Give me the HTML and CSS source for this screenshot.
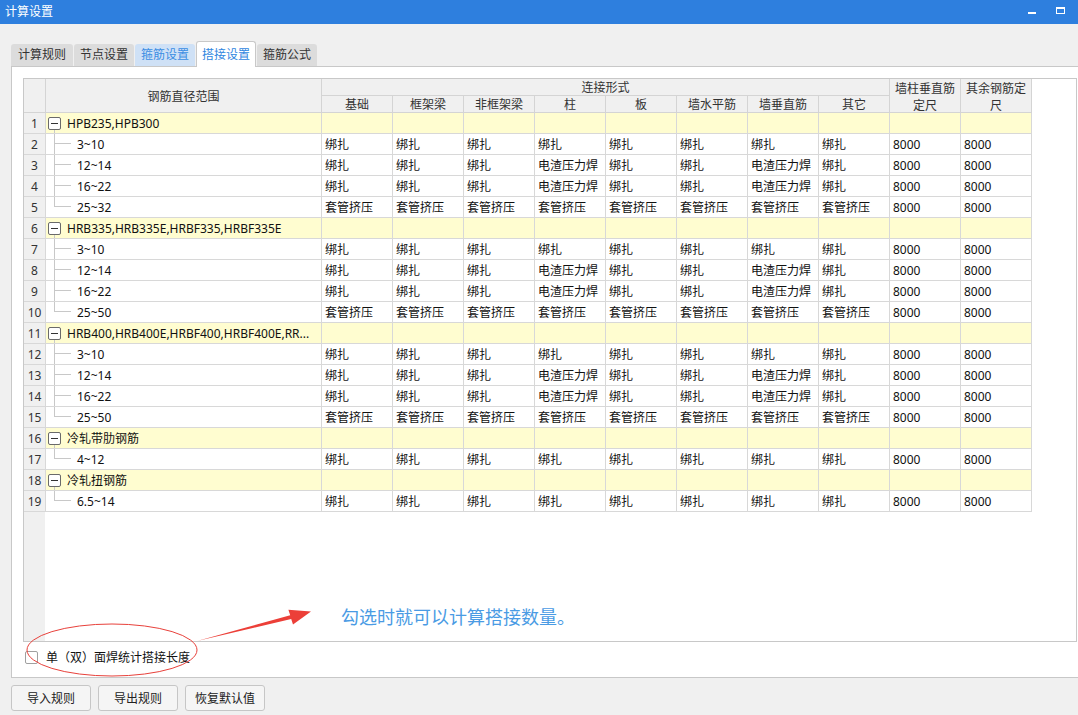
FILE: index.html
```html
<!DOCTYPE html>
<html lang="zh-CN">
<head>
<meta charset="utf-8">
<title>计算设置</title>
<link rel="stylesheet" href="styles.css">
</head>
<body>
<div class="window">
  <div class="titlebar">
    <span class="title">计算设置</span>
    <div class="winbtns"><span class="wmin"></span><span class="wmax"></span></div>
  </div>

  <div class="tabs">
    <div class="tab">计算规则</div>
    <div class="tab">节点设置</div>
    <div class="tab hover">箍筋设置</div>
    <div class="tab active">搭接设置</div>
    <div class="tab">箍筋公式</div>
  </div>

  <div class="panel">
    <div class="grid-area">
      <div class="head">
        <div class="h-num"></div>
        <div class="h-name">钢筋直径范围</div>
        <div class="h-conn">连接形式</div>
        <div class="h-wall">墙柱垂直筋定尺</div>
        <div class="h-rest">其余钢筋定尺</div>
        <div>基础</div><div>框架梁</div><div>非框架梁</div><div>柱</div><div>板</div><div>墙水平筋</div><div>墙垂直筋</div><div>其它</div>
      </div>

      <div class="row group"><div class="num">1</div><div class="name"><span class="tg"></span>HPB235,HPB300</div><div></div><div></div><div></div><div></div><div></div><div></div><div></div><div></div><div></div><div></div></div>
      <div class="row"><div class="num">2</div><div class="name child">3~10</div><div>绑扎</div><div>绑扎</div><div>绑扎</div><div>绑扎</div><div>绑扎</div><div>绑扎</div><div>绑扎</div><div>绑扎</div><div>8000</div><div>8000</div></div>
      <div class="row"><div class="num">3</div><div class="name child">12~14</div><div>绑扎</div><div>绑扎</div><div>绑扎</div><div>电渣压力焊</div><div>绑扎</div><div>绑扎</div><div>电渣压力焊</div><div>绑扎</div><div>8000</div><div>8000</div></div>
      <div class="row"><div class="num">4</div><div class="name child">16~22</div><div>绑扎</div><div>绑扎</div><div>绑扎</div><div>电渣压力焊</div><div>绑扎</div><div>绑扎</div><div>电渣压力焊</div><div>绑扎</div><div>8000</div><div>8000</div></div>
      <div class="row"><div class="num">5</div><div class="name child last">25~32</div><div>套管挤压</div><div>套管挤压</div><div>套管挤压</div><div>套管挤压</div><div>套管挤压</div><div>套管挤压</div><div>套管挤压</div><div>套管挤压</div><div>8000</div><div>8000</div></div>

      <div class="row group"><div class="num">6</div><div class="name"><span class="tg"></span>HRB335,HRB335E,HRBF335,HRBF335E</div><div></div><div></div><div></div><div></div><div></div><div></div><div></div><div></div><div></div><div></div></div>
      <div class="row"><div class="num">7</div><div class="name child">3~10</div><div>绑扎</div><div>绑扎</div><div>绑扎</div><div>绑扎</div><div>绑扎</div><div>绑扎</div><div>绑扎</div><div>绑扎</div><div>8000</div><div>8000</div></div>
      <div class="row"><div class="num">8</div><div class="name child">12~14</div><div>绑扎</div><div>绑扎</div><div>绑扎</div><div>电渣压力焊</div><div>绑扎</div><div>绑扎</div><div>电渣压力焊</div><div>绑扎</div><div>8000</div><div>8000</div></div>
      <div class="row"><div class="num">9</div><div class="name child">16~22</div><div>绑扎</div><div>绑扎</div><div>绑扎</div><div>电渣压力焊</div><div>绑扎</div><div>绑扎</div><div>电渣压力焊</div><div>绑扎</div><div>8000</div><div>8000</div></div>
      <div class="row"><div class="num">10</div><div class="name child last">25~50</div><div>套管挤压</div><div>套管挤压</div><div>套管挤压</div><div>套管挤压</div><div>套管挤压</div><div>套管挤压</div><div>套管挤压</div><div>套管挤压</div><div>8000</div><div>8000</div></div>

      <div class="row group"><div class="num">11</div><div class="name"><span class="tg"></span>HRB400,HRB400E,HRBF400,HRBF400E,RR...</div><div></div><div></div><div></div><div></div><div></div><div></div><div></div><div></div><div></div><div></div></div>
      <div class="row"><div class="num">12</div><div class="name child">3~10</div><div>绑扎</div><div>绑扎</div><div>绑扎</div><div>绑扎</div><div>绑扎</div><div>绑扎</div><div>绑扎</div><div>绑扎</div><div>8000</div><div>8000</div></div>
      <div class="row"><div class="num">13</div><div class="name child">12~14</div><div>绑扎</div><div>绑扎</div><div>绑扎</div><div>电渣压力焊</div><div>绑扎</div><div>绑扎</div><div>电渣压力焊</div><div>绑扎</div><div>8000</div><div>8000</div></div>
      <div class="row"><div class="num">14</div><div class="name child">16~22</div><div>绑扎</div><div>绑扎</div><div>绑扎</div><div>电渣压力焊</div><div>绑扎</div><div>绑扎</div><div>电渣压力焊</div><div>绑扎</div><div>8000</div><div>8000</div></div>
      <div class="row"><div class="num">15</div><div class="name child last">25~50</div><div>套管挤压</div><div>套管挤压</div><div>套管挤压</div><div>套管挤压</div><div>套管挤压</div><div>套管挤压</div><div>套管挤压</div><div>套管挤压</div><div>8000</div><div>8000</div></div>

      <div class="row group"><div class="num">16</div><div class="name"><span class="tg"></span>冷轧带肋钢筋</div><div></div><div></div><div></div><div></div><div></div><div></div><div></div><div></div><div></div><div></div></div>
      <div class="row"><div class="num">17</div><div class="name child last">4~12</div><div>绑扎</div><div>绑扎</div><div>绑扎</div><div>绑扎</div><div>绑扎</div><div>绑扎</div><div>绑扎</div><div>绑扎</div><div>8000</div><div>8000</div></div>

      <div class="row group"><div class="num">18</div><div class="name"><span class="tg"></span>冷轧扭钢筋</div><div></div><div></div><div></div><div></div><div></div><div></div><div></div><div></div><div></div><div></div></div>
      <div class="row"><div class="num">19</div><div class="name child last">6.5~14</div><div>绑扎</div><div>绑扎</div><div>绑扎</div><div>绑扎</div><div>绑扎</div><div>绑扎</div><div>绑扎</div><div>绑扎</div><div>8000</div><div>8000</div></div>
    </div>

    <div class="option"><span class="cb"></span><span class="opt-label">单（双）面焊统计搭接长度</span></div>
  </div>

  <div class="buttons">
    <button class="btn">导入规则</button>
    <button class="btn">导出规则</button>
    <button class="btn">恢复默认值</button>
  </div>

  <svg class="annot" width="1078" height="715" viewBox="0 0 1078 715">
    <ellipse cx="112" cy="650" rx="85" ry="26" fill="none" stroke="#e8413b" stroke-width="1"/>
    <polygon points="197,641 290.2,615.2 288.4,609.8 311,611.5 293,624.4 291.2,619.0" fill="#ec3f38"/>
  </svg>
  <div class="note">勾选时就可以计算搭接数量。</div>
</div>
</body>
</html>
```

FILE: styles.css
```css
html, body {
  margin: 0;
  padding: 0;
  overflow: hidden;
}
body {
  background: #f0f0f0;
  font-family: "Noto Sans", "Noto Sans CJK SC", sans-serif;
  font-size: 12px;
  color: #1a1a1a;
}
.window {
  position: relative;
  width: 1078px;
  height: 715px;
}

/* title bar */
.titlebar {
  height: 24px;
  background: #2e7fde;
  display: flex;
  align-items: center;
  justify-content: space-between;
}
.title {
  color: #fff;
  font-size: 12px;
  padding-left: 5px;
  line-height: 24px;
}
.winbtns {
  display: flex;
  align-items: center;
  gap: 20px;
  padding-right: 13px;
}
.wmin {
  width: 8px;
  height: 2px;
  margin-top: 1px;
  background: #fff;
}
.wmax {
  width: 9px;
  height: 7px;
  box-sizing: border-box;
  border: 1px solid #fff;
  border-top-width: 2px;
  margin-bottom: 3px;
}

/* tabs */
.tabs {
  height: 42px;
  display: flex;
  align-items: flex-end;
  padding-left: 11px;
  gap: 1px;
  position: relative;
  z-index: 1;
}
.tab {
  height: 22px;
  line-height: 22px;
  padding: 0 6px;
  background: #dcdcdc;
  color: #333;
  border-radius: 3px 3px 0 0;
  font-size: 12px;
}
.tab:first-child {
  padding: 0 7px;
}
.tab.hover {
  background: #cfe1f6;
  color: #3b8de3;
}
.tab.active {
  height: 26px;
  line-height: 25px;
  padding: 0 5px;
  box-sizing: border-box;
  background: #fff;
  color: #2f86e0;
  border: 1px solid #c8c8c8;
  border-bottom: none;
  margin-bottom: -1px;
}

/* main panel */
.panel {
  margin-left: 11px;
  width: 1078px;
  height: 612px;
  box-sizing: border-box;
  border: 1px solid #c8c8c8;
  background: #fff;
  padding: 11px 0 0 11px;
}
.grid-area {
  width: 1054px;
  height: 564px;
  box-sizing: border-box;
  border: 1px solid #c8c8c8;
  background: linear-gradient(90deg, #f0f0f0 21px, #fff 21px);
  overflow: hidden;
}

.head {
  display: grid;
  grid-template-columns: 22px 276px repeat(10, 71px);
  grid-template-rows: 17px 17px;
  background: #f0f0f0;
  width: 1008px;
}
.head > div {
  box-sizing: border-box;
  border-right: 1px solid #d4d4d4;
  border-bottom: 1px solid #d4d4d4;
  display: flex;
  align-items: center;
  justify-content: center;
  text-align: center;
  color: #333;
  font-size: 12px;
  line-height: 16px;
  padding-top: 1px;
  white-space: nowrap;
}
.head > .h-num { grid-column: 1; grid-row: 1 / 3; }
.head > .h-name { grid-column: 2; grid-row: 1 / 3; padding-top: 3px; }
.head > .h-conn { grid-column: 3 / 11; grid-row: 1; }
.head > .h-wall, .head > .h-rest {
  grid-row: 1 / 3;
  white-space: normal;
  line-height: 17px;
  padding: 2px 2px 0;
}
.head > .h-wall { grid-column: 11; }
.head > .h-rest { grid-column: 12; }

.row {
  display: grid;
  grid-template-columns: 22px 276px repeat(10, 71px);
  height: 21px;
  width: 1008px;
  background: #fff;
}
.row > div {
  box-sizing: border-box;
  border-right: 1px solid #d8d8d8;
  border-bottom: 1px solid #d8d8d8;
  padding-left: 3px;
  line-height: 21px;
  white-space: nowrap;
  overflow: hidden;
  color: #111;
}
.row.group > div {
  background: #fffdd0;
}
.row > .num,
.row.group > .num {
  background: #f0f0f0;
  text-align: center;
  padding: 0;
  color: #333;
}
.row.group > .name {
  display: flex;
  align-items: center;
  padding-left: 2px;
  background: linear-gradient(#c8c8c8, #c8c8c8) 8px 100% / 1px 4px no-repeat, #fffdd0;
}
.tg {
  width: 13px;
  height: 13px;
  box-sizing: border-box;
  border: 1px solid #6a6a6a;
  border-radius: 2px;
  background: linear-gradient(#333, #333) center / 7px 1px no-repeat, #fff;
  margin-right: 6px;
  flex: none;
}
.row > .name.child {
  padding-left: 31px;
  background:
    linear-gradient(#c8c8c8, #c8c8c8) 8px 0 / 1px 100% no-repeat,
    linear-gradient(#c8c8c8, #c8c8c8) 8px 9px / 17px 1px no-repeat,
    #fff;
}
.row > .name.child.last {
  background:
    linear-gradient(#c8c8c8, #c8c8c8) 8px 0 / 1px 10px no-repeat,
    linear-gradient(#c8c8c8, #c8c8c8) 8px 9px / 17px 1px no-repeat,
    #fff;
}

/* checkbox option */
.option {
  height: 30px;
  display: flex;
  align-items: center;
  padding-left: 2px;
}
.cb {
  width: 13px;
  height: 13px;
  box-sizing: border-box;
  border: 1px solid #a0a0a0;
  border-radius: 2px;
  background: #fff;
  margin-right: 8px;
}
.opt-label {
  color: #111;
  font-size: 12px;
}

/* buttons */
.buttons {
  display: flex;
  gap: 7px;
  padding: 7px 0 0 11px;
}
.btn {
  width: 80px;
  height: 26px;
  border: 1px solid #c6c6c6;
  border-radius: 3px;
  background: #f5f5f5;
  font-family: "Noto Sans", "Noto Sans CJK SC", sans-serif;
  font-size: 12px;
  color: #222;
  padding: 0;
}

/* annotation overlay */
.annot {
  position: absolute;
  left: 0;
  top: 0;
  pointer-events: none;
}
.note {
  position: absolute;
  left: 341px;
  top: 603px;
  font-size: 18px;
  line-height: 26px;
  color: #4a9be4;
  font-family: "Noto Sans CJK SC", sans-serif;
  white-space: nowrap;
}
```
